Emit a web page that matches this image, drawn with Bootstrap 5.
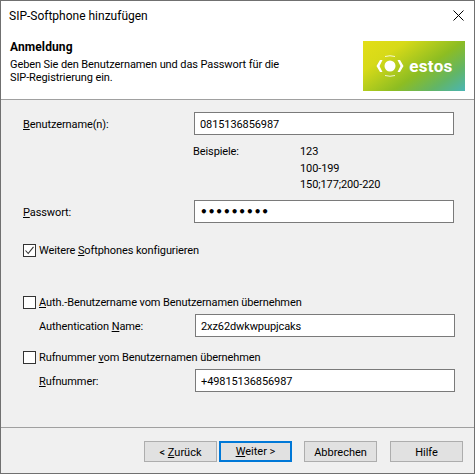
<!DOCTYPE html>
<html lang="de">
<head>
    <meta charset="UTF-8">
    <meta name="viewport" content="width=device-width, initial-scale=1.0">
    <title>SIP-Softphone hinzufügen</title>
    <link href="https://cdn.jsdelivr.net/npm/bootstrap@5.3.0/dist/css/bootstrap.min.css" rel="stylesheet">
    <style>
        html, body {
            margin: 0;
            background-color: #f0f0f0;
        }
        body {
            font-family: Roboto, sans-serif;
            font-size: 11px;
            letter-spacing: -.1px;
            line-height: 16px;
            color: #000;
        }
        .dlg-window {
            width: 475px;
            height: 474px;
            border: 1px solid #707070;
            background-color: #f0f0f0;
        }
        .dlg-top {
            height: 99px;
            flex: none;
            background-color: #fff;
            border-bottom: 1px solid #a0a0a0;
        }
        .dlg-title {
            height: 30px;
            padding: 7px 10px 0 8px;
            font-size: 12px;
            letter-spacing: 0;
        }
        .dlg-close {
            width: 11px;
            height: 11px;
            margin-top: 2px;
        }
        .dlg-head {
            padding: 8px 9px 0 9px;
        }
        .dlg-heading {
            font-weight: 700;
            font-size: 12px;
            letter-spacing: .1px;
            line-height: 16px;
            margin-bottom: 3px;
        }
        .dlg-intro {
            width: 280px;
            line-height: 13px;
        }
        .dlg-logo {
            width: 102px;
            height: 50px;
            margin-top: 2px;
            background: linear-gradient(145deg, #e3de17 0%, #d7da18 25%, #8dbd22 58%, #62b566 80%, #4ab5b5 100%);
            color: #fff;
            font-weight: 700;
            font-size: 17px;
            letter-spacing: .3px;
        }
        .dlg-body {
            height: 327px;
            flex: none;
            padding: 12px 0 0 22px;
        }
        .dlg-row {
            height: 23px;
        }
        .dlg-label {
            width: 171px;
            padding-top: 2px;
        }
        .dlg-label-in {
            width: 156px;
            margin-left: 16px;
            padding-top: 2px;
        }
        .dlg-input {
            width: 260px;
            height: 23px;
            border: 1px solid #7a7a7a;
            border-radius: 0;
            padding: 2px 5px 0;
            font: inherit;
            letter-spacing: inherit;
            line-height: 19px;
            color: #000;
            background: #fff;
            outline: none;
        }
        .dlg-pass {
            font-family: "DejaVu Sans", sans-serif;
            font-size: 12px;
            font-weight: 700;
            letter-spacing: 0;
            padding-top: 0;
        }
        .dlg-examples {
            margin: 8px 0 7px 170px;
            height: 50px;
            padding-top: 1px;
            line-height: 16.5px;
        }
        .dlg-examples-label {
            width: 107px;
        }
        .dlg-check {
            height: 16px;
            gap: 3px;
        }
        .dlg-check span {
            padding-top: 2px;
        }
        .dlg-check input {
            width: 13px;
            height: 13px;
            margin: 0;
            border: 1px solid #333;
            border-radius: 0;
            background-color: #fff;
            box-shadow: none;
            appearance: none;
            flex: none;
        }
        .dlg-check input:checked {
            background: #fff url("data:image/svg+xml,%3Csvg xmlns='http://www.w3.org/2000/svg' viewBox='0 0 11 11'%3E%3Cpath d='M1.5 5.500 4.200 8.500 9.500 1.800' fill='none' stroke='%23333' stroke-width='1.100'/%3E%3C/svg%3E") no-repeat center / 11px 11px;
        }
        .dlg-more { margin-top: 19px; }
        .dlg-auth { margin-top: 36px; }
        .dlg-num { margin-top: 12px; }
        .dlg-sub { margin-top: 4px; }
        .dlg-foot {
            height: 46px;
            flex: none;
            border-top: 1px solid #a0a0a0;
            padding: 13px 0 0 143px;
        }
        .dlg-btn {
            width: 73px;
            height: 21px;
            padding: 2px 0 0;
            border: 1px solid #adadad;
            border-radius: 0;
            background-color: #e1e1e1;
            color: #000;
            font: inherit;
            letter-spacing: 0;
            line-height: 16px;
        }
        .dlg-btn-main {
            border: 2px solid #0078d7;
            margin-left: 2px;
            padding-top: 1px;
        }
        .dlg-btn-cancel { margin-left: 12px; }
        .dlg-btn-help { margin-left: 13px; }
    </style>
</head>
<body>
    <div class="dlg-window d-flex flex-column">
        <div class="dlg-top">
            <div class="dlg-title d-flex justify-content-between align-items-start">
                <span>SIP-Softphone hinzufügen</span>
                <svg class="dlg-close" viewBox="0 0 11 11"><path d="M.5.5l10 10M10.500.5l-10 10" stroke="#000" fill="none"/></svg>
            </div>
            <div class="dlg-head d-flex justify-content-between">
                <div>
                    <div class="dlg-heading">Anmeldung</div>
                    <div class="dlg-intro">Geben Sie den Benutzernamen und das Passwort für die SIP-Registrierung ein.</div>
                </div>
                <div class="dlg-logo d-flex align-items-center justify-content-center gap-1">
                    <svg width="30" height="22" viewBox="0 0 30 22">
                        <circle cx="15" cy="11" r="5.500" fill="#fff"/>
                        <path d="M5 5 1.500 11 5 17h2.500L4.500 11 7.500 5zM25 5l3.500 6-3.500 6h-2.500l3-6-3-6z" fill="#fff"/>
                        <path d="M10 1.500q5-1.500 10 0M10 20.500q5 1.500 10 0" stroke="#fff" stroke-width=".8" fill="none"/>
                    </svg>
                    <span>estos</span>
                </div>
            </div>
        </div>

        <div class="dlg-body">
            <div class="dlg-row d-flex align-items-center">
                <label class="dlg-label" for="userName"><u>B</u>enutzername(n):</label>
                <input class="dlg-input" id="userName" type="text" value="0815136856987">
            </div>
            <div class="dlg-examples d-flex">
                <div class="dlg-examples-label">Beispiele:</div>
                <div>123<br>100-199<br>150;177;200-220</div>
            </div>
            <div class="dlg-row d-flex align-items-center">
                <label class="dlg-label" for="password"><u>P</u>asswort:</label>
                <input class="dlg-input dlg-pass" id="password" type="password" value="123456789">
            </div>
            <label class="dlg-check dlg-more d-flex align-items-center">
                <input type="checkbox" checked>
                <span>Weitere <u>S</u>oftphones konfigurieren</span>
            </label>
            <label class="dlg-check dlg-auth d-flex align-items-center">
                <input type="checkbox">
                <span><u>A</u>uth.-Benutzername vom Benutzernamen übernehmen</span>
            </label>
            <div class="dlg-row dlg-sub d-flex align-items-center">
                <label class="dlg-label-in" for="authInput">Authentication <u>N</u>ame:</label>
                <input class="dlg-input" id="authInput" type="text" value="2xz62dwkwpupjcaks">
            </div>
            <label class="dlg-check dlg-num d-flex align-items-center">
                <input type="checkbox">
                <span>Rufnummer <u>v</u>om Benutzernamen übernehmen</span>
            </label>
            <div class="dlg-row dlg-sub d-flex align-items-center">
                <label class="dlg-label-in" for="numInput"><u>R</u>ufnummer:</label>
                <input class="dlg-input" id="numInput" type="text" value="+49815136856987">
            </div>
        </div>

        <div class="dlg-foot d-flex align-items-start">
            <button class="dlg-btn" type="button">&lt; <u>Z</u>urück</button>
            <button class="dlg-btn dlg-btn-main" type="button"><u>W</u>eiter &gt;</button>
            <button class="dlg-btn dlg-btn-cancel" type="button">Abbrechen</button>
            <button class="dlg-btn dlg-btn-help" type="button">Hilfe</button>
        </div>
    </div>
    <script src="https://cdn.jsdelivr.net/npm/bootstrap@5.3.0/dist/js/bootstrap.bundle.min.js"></script>
</body>
</html>
